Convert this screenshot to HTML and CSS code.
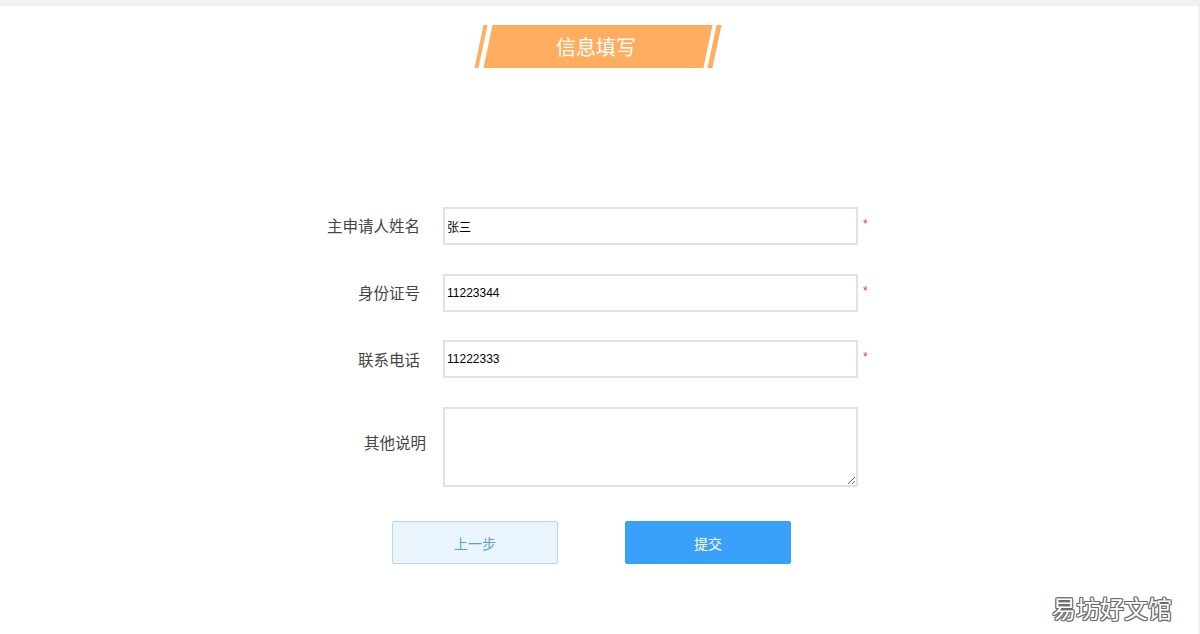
FILE: index.html
```html
<!DOCTYPE html>
<html lang="zh-CN">
<head>
<meta charset="utf-8">
<title>信息填写</title>
<link rel="stylesheet" href="styles.css">
</head>
<body>
<div class="topbar"></div>
<main class="page">
  <div class="banner-wrap">
    <div class="banner">
      <div class="stripe stripe-left"></div>
      <div class="banner-main"><span class="banner-text">信息填写</span></div>
      <div class="stripe stripe-right"></div>
    </div>
  </div>

  <form class="form">
    <div class="row">
      <label class="label">主申请人姓名</label>
      <input class="field" type="text" value="张三">
      <span class="req">*</span>
    </div>
    <div class="row">
      <label class="label">身份证号</label>
      <input class="field" type="text" value="11223344">
      <span class="req">*</span>
    </div>
    <div class="row">
      <label class="label">联系电话</label>
      <input class="field" type="text" value="11222333">
      <span class="req">*</span>
    </div>
    <div class="row row-area">
      <label class="label label-area">其他说明</label>
      <textarea class="area"></textarea>
    </div>
    <div class="actions">
      <button type="button" class="btn btn-prev">上一步</button>
      <button type="button" class="btn btn-submit">提交</button>
    </div>
  </form>

  <div class="watermark">易坊好文馆</div>
</main>
</body>
</html>
```
FILE: styles.css
```css
html, body {
  margin: 0;
  padding: 0;
  height: 634px;
  overflow: hidden;
  background: #fff;
  font-family: "Noto Sans CJK SC", "Noto Sans", sans-serif;
}

.topbar {
  height: 6px;
  background: #f1f1f1;
}

.page {
  position: relative;
  height: 628px;
  border-right: 2px solid #f1f1f1;
  box-sizing: border-box;
}

.banner-wrap {
  display: flex;
  justify-content: center;
  padding-top: 19px;
  padding-right: 2px;
}

.banner {
  display: flex;
  height: 43px;
}

.stripe {
  width: 4px;
  background: #ffae5f;
  transform: skewX(-12deg);
}

.stripe-left {
  margin-right: 5px;
}

.stripe-right {
  width: 5px;
  margin-left: 4px;
}

.banner-main {
  width: 220px;
  background: #ffae5f;
  transform: skewX(-12deg);
  display: flex;
  align-items: center;
  justify-content: center;
}

.banner-text {
  transform: skewX(12deg);
  color: #fff;
  font-size: 20px;
  line-height: 1;
  margin-left: -4px;
}

.form {
  width: 600px;
  margin: 139px 0 0 300px;
  display: flex;
  flex-direction: column;
}

.row {
  display: flex;
  align-items: center;
  margin-bottom: 28.7px;
}

.row-area {
  margin-bottom: 34px;
}

.label {
  width: 120px;
  text-align: right;
  margin-right: 23px;
  font-size: 15.5px;
  color: #444;
  line-height: 1;
}

.label-area {
  width: 126px;
  margin-right: 17px;
  margin-top: -8px;
}

.field {
  box-sizing: border-box;
  width: 415px;
  height: 38px;
  border: 2px solid #e2e2e2;
  padding: 0 2px;
  margin: 0;
  font-family: "Liberation Sans", "Noto Sans CJK SC", sans-serif;
  font-size: 12px;
  color: #000;
  outline: none;
}

.req {
  margin-left: 5px;
  margin-top: -4px;
  color: #e23b3b;
  font-family: "Liberation Sans", sans-serif;
  font-size: 12px;
}

.area {
  box-sizing: border-box;
  width: 415px;
  height: 80px;
  border: 2px solid #e2e2e2;
  margin: 0;
  padding: 2px;
  outline: none;
}

.actions {
  display: flex;
  gap: 67px;
  padding-left: 92px;
}

.btn {
  box-sizing: border-box;
  width: 166px;
  height: 43px;
  font-family: "Noto Sans CJK SC", sans-serif;
  font-size: 14px;
  border-radius: 2px;
  cursor: pointer;
  padding: 0;
}

.btn-prev {
  background: #eaf4fd;
  border: 1px solid #b8d5ec;
  color: #5b9fd2;
}

.btn-submit {
  background: #39a1fa;
  border: 1px solid #39a1fa;
  color: #fff;
}

.watermark {
  position: absolute;
  right: 26px;
  bottom: 14px;
  font-size: 24px;
  line-height: 1;
  color: #fff;
  text-shadow:
    -1px -1px 0 #6a6a6a, 1px -1px 0 #6a6a6a,
    -1px 1px 0 #6a6a6a, 1px 1px 0 #6a6a6a,
    0 -1px 0 #6a6a6a, 0 1px 0 #6a6a6a,
    -1px 0 0 #6a6a6a, 1px 0 0 #6a6a6a;
}
```
